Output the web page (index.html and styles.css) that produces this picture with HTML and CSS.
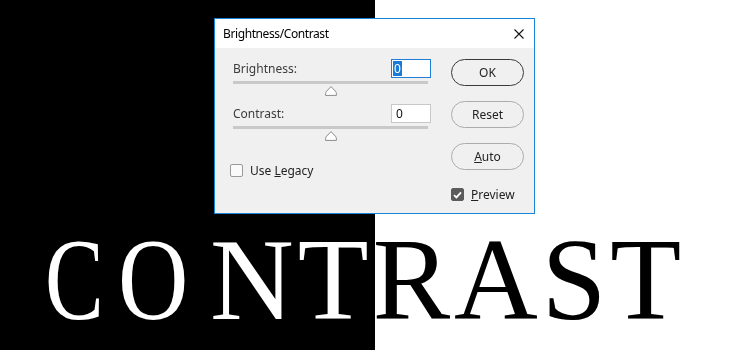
FILE: index.html
```html
<!DOCTYPE html>
<html lang="en">

<head>
  <meta charset="UTF-8">
  <meta name="viewport" content="width=device-width, initial-scale=1.0">
  <title>Brightness/Contrast</title>
  <link rel="stylesheet" href="styles.css">
</head>

<body>
  <div class="stage">

    <div class="dialog" role="dialog" aria-labelledby="dialog-title">
      <div class="titlebar">
        <span id="dialog-title">Brightness/Contrast</span>
        <svg class="close" width="10" height="10" viewBox="0 0 10 10" aria-label="Close">
          <path d="M0.5 0.5 L9.5 9.5 M9.5 0.5 L0.5 9.5" stroke="#111" stroke-width="1.1" fill="none"/>
        </svg>
      </div>

      <div class="dialog-body">
        <div class="controls">
          <div class="field">
            <div class="field-row">
              <label class="field-label">Brightness:</label>
              <span class="num num-focus"><span class="sel">0</span></span>
            </div>
            <div class="track"></div>
            <div class="thumb-row">
              <svg width="12" height="10" viewBox="0 0 12 10">
                <path d="M6 0.6 L10.4 5.2 Q11.4 6.3 11.4 7.6 V9.4 H0.6 V7.6 Q0.6 6.3 1.6 5.2 Z" fill="#fff" stroke="#8a8a8a" stroke-width="1"/>
              </svg>
            </div>
          </div>

          <div class="field field-second">
            <div class="field-row">
              <label class="field-label">Contrast:</label>
              <span class="num">0</span>
            </div>
            <div class="track"></div>
            <div class="thumb-row">
              <svg width="12" height="10" viewBox="0 0 12 10">
                <path d="M6 0.6 L10.4 5.2 Q11.4 6.3 11.4 7.6 V9.4 H0.6 V7.6 Q0.6 6.3 1.6 5.2 Z" fill="#fff" stroke="#8a8a8a" stroke-width="1"/>
              </svg>
            </div>
          </div>

          <label class="check check-legacy">
            <span class="box"></span>
            <span>Use <u>L</u>egacy</span>
          </label>
        </div>

        <div class="actions">
          <button class="btn btn-default">OK</button>
          <button class="btn">Reset</button>
          <button class="btn"><u>A</u>uto</button>
          <label class="check check-preview">
            <span class="box box-checked">
              <svg width="9" height="8" viewBox="0 0 9 8">
                <path d="M1 4.2 L3.4 6.4 L8 1.4" stroke="#fff" stroke-width="1.8" fill="none"/>
              </svg>
            </span>
            <span><u>P</u>review</span>
          </label>
        </div>
      </div>
    </div>

    <!-- C and O are narrower in the original face -->
    <h1 class="big"><span class="narrow-c">C</span><span class="narrow-o">O</span>NTRAST</h1>

  </div>
</body>
</html>
```

FILE: styles.css
```css
body {
  margin: 0;
}

.stage {
  height: 350px;
  overflow: hidden;
  isolation: isolate;
  background: linear-gradient(to right, #000 375px, #fff 375px);
}

/* dialog window */

.dialog {
  box-sizing: border-box;
  width: 321px;
  margin: 18px 0 0 214px;
  border: 1px solid #1883d7;
  background-color: #f0f0f0;
  font-family: 'Noto Sans', sans-serif;
  font-size: 12px;
  color: #222;
}

.titlebar {
  display: flex;
  align-items: center;
  justify-content: space-between;
  height: 29px;
  padding: 0 10px 0 8px;
  background-color: #fff;
  color: #000;
  letter-spacing: -0.4px;
}

.close {
  margin-top: 1px;
}

.dialog-body {
  display: flex;
  gap: 20px;
  height: 165px;
  padding: 0 10px 0 16px;
}

.controls {
  width: 200px;
  padding-top: 11px;
}

.field-row {
  display: flex;
  align-items: center;
  justify-content: space-between;
  height: 19px;
  padding-left: 2px;
}

.field-label {
  color: #3c3c3c;
}

.num {
  box-sizing: border-box;
  width: 40px;
  height: 19px;
  padding-left: 4px;
  border: 1px solid #c8c8c8;
  background-color: #fff;
  line-height: 17px;
  color: #111;
}

.num-focus {
  border-color: #1e7fd8;
  padding-left: 1px;
}

.sel {
  display: inline-block;
  padding: 0 1px;
  line-height: 15px;
  background-color: #1a7ad4;
  color: #fff;
}

.track {
  height: 3px;
  margin: 3px 3px 0 2px;
  background-color: #c9c9c9;
}

.thumb-row {
  display: flex;
  justify-content: center;
  margin: 2px 3px 0 2px;
}

.thumb-row svg {
  display: block;
}

.field-second {
  margin-top: 8px;
}

/* checkboxes */

.check {
  display: flex;
  align-items: center;
  gap: 7px;
  color: #222;
}

.box {
  box-sizing: border-box;
  display: flex;
  align-items: center;
  justify-content: center;
  width: 13px;
  height: 13px;
  border: 1px solid #9a9a9a;
  border-radius: 2px;
  background-color: #fafafa;
}

.box-checked {
  border-color: #5c5c5c;
  background-color: #5c5c5c;
}

.check-legacy {
  margin-top: 21px;
  margin-left: -1px;
}

.check-preview {
  margin-top: 16px;
}

/* buttons */

.actions {
  display: flex;
  flex-direction: column;
  width: 73px;
  padding-top: 11px;
}

.btn {
  height: 27px;
  margin: 0 0 15px;
  padding: 0;
  border: 1px solid #acacac;
  border-radius: 14px;
  background-color: #f0f0f0;
  font-family: inherit;
  font-size: 12px;
  color: #222;
}

.btn-default {
  border-color: #3a3a3a;
}

.actions .btn:nth-child(3) {
  margin-bottom: 0;
}

/* headline */

.big {
  margin: 8px 0 0;
  padding-right: 20px;
  font-family: 'Liberation Serif', serif;
  font-size: 116px;
  font-weight: normal;
  line-height: 1;
  letter-spacing: 4px;
  text-align: center;
  color: #fff;
  mix-blend-mode: difference;
}

.narrow-c,
.narrow-o {
  display: inline-block;
  transform-origin: left center;
}

.narrow-c {
  transform: scaleX(0.76);
  margin-right: -8px;
}

.narrow-o {
  transform: scaleX(0.84);
  margin-right: 4px;
}
```
